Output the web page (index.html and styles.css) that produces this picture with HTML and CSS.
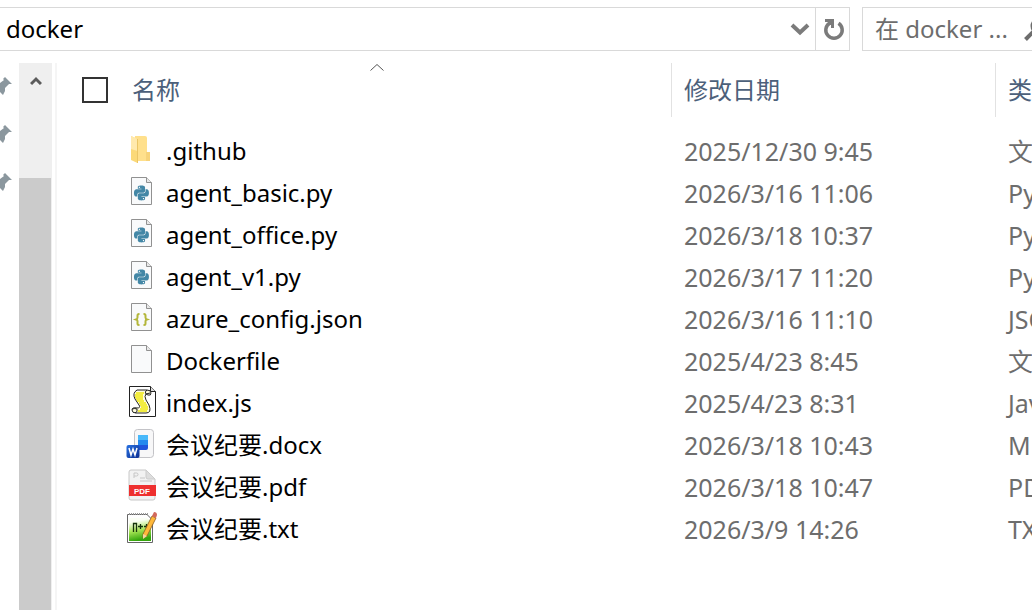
FILE: index.html
```html
<!DOCTYPE html>
<html lang="zh-CN">
<head>
    <meta charset="UTF-8">
    <meta name="viewport" content="width=device-width, initial-scale=1.0">
    <title>docker</title>
    <link rel="stylesheet" href="styles.css">
</head>
<body>
    <!-- Icons used more than once -->
    <svg class="symbols" aria-hidden="true">
        <symbol id="pin" viewBox="0 0 12 18">
            <path d="M5 0L12 7L9 7L5 11L5 14L3 18L0 15L0 6L4 3L3 2Z" fill="#8b979e"/>
        </symbol>
        <symbol id="page" viewBox="0 0 32 32">
            <path d="M5.500 2.500H20.500L25.500 7.500V29.500H5.500Z" fill="#f9fafb" stroke="#919191"/>
            <path d="M20.500 2.500V7.500H25.500" fill="#e8e8e8" stroke="#919191"/>
        </symbol>
        <path id="snake" d="M14.25.18l.9.2.73.26.59.3.45.32.34.34.25.34.16.33.1.3.04.26.02.2-.01.13V8.5l-.05.63-.13.55-.21.46-.26.38-.3.31-.33.25-.35.19-.35.14-.33.1-.3.07-.26.04-.21.02H8.77l-.69.05-.59.14-.5.22-.41.27-.33.32-.27.35-.2.36-.15.37-.1.35-.07.32-.04.27-.02.21v3.06H3.17l-.21-.03-.28-.07-.32-.12-.35-.18-.36-.26-.36-.36-.35-.46-.32-.59-.28-.73-.21-.88-.14-1.05-.05-1.23.06-1.22.16-1.04.24-.87.32-.71.36-.57.4-.44.42-.33.42-.24.4-.16.36-.1.32-.05.24-.01h.16l.06.01h8.16v-.83H6.18l-.01-2.75-.02-.37.05-.34.11-.31.17-.28.25-.26.31-.23.38-.2.44-.18.51-.15.58-.12.64-.1.71-.06.77-.04.84-.02 1.27.05zm-6.3 1.98l-.23.33-.08.41.08.41.23.34.33.22.41.09.41-.09.33-.22.23-.34.08-.41-.08-.41-.23-.33-.33-.22-.41-.09-.41.09z"/>
        <symbol id="python" viewBox="0 0 32 32">
            <use href="#page"/>
            <g transform="translate(8 10.500) scale(0.620)" fill="#4387a6">
                <use href="#snake"/>
                <use href="#snake" transform="rotate(180 12 12)"/>
            </g>
        </symbol>
    </svg>

    <header class="toolbar">
        <div class="address">
            <input type="text" class="address-input" value="docker" aria-label="地址">
            <button class="icon-button" aria-label="以前的位置">
                <svg width="20" height="14" viewBox="0 0 20 14"><path d="M2 3L10 10.500L18 3" fill="none" stroke="#7b7b7b" stroke-width="4"/></svg>
            </button>
            <button class="icon-button refresh" aria-label="刷新">
                <svg width="22" height="24" viewBox="0 0 22 24">
                    <path d="M15.500 6.200A8.200 8.200 0 1 1 6.500 6.200" fill="none" stroke="#7b7b7b" stroke-width="3.500"/>
                    <path d="M2 2H11V11H8V8H5V5H2Z" fill="#7b7b7b"/>
                </svg>
            </button>
        </div>
        <div class="search">
            <input type="text" class="search-input" placeholder="在 docker ..." aria-label="搜索">
            <svg class="search-icon" width="24" height="24" viewBox="0 0 24 24">
                <circle cx="15" cy="8" r="7" fill="none" stroke="#6d6d6d" stroke-width="3"/>
                <path d="M11 12L1.500 21.500" stroke="#6d6d6d" stroke-width="4"/>
            </svg>
        </div>
    </header>

    <main class="explorer">
        <nav class="pins">
            <svg class="pin"><use href="#pin"/></svg>
            <svg class="pin"><use href="#pin"/></svg>
            <svg class="pin"><use href="#pin"/></svg>
        </nav>
        <div class="scrollbar">
            <button class="scroll-up" aria-label="向上滚动">
                <svg width="12" height="10" viewBox="0 0 12 10"><path d="M1 8L6 3L11 8" fill="none" stroke="#5b5b5b" stroke-width="3"/></svg>
            </button>
            <div class="scroll-thumb"></div>
        </div>

        <section class="files">
            <table>
                <thead>
                    <tr>
                        <th class="col-name">
                            <div class="name-head">
                                <input type="checkbox" class="select-all" aria-label="全选">
                                <span>名称</span>
                            </div>
                            <svg class="sort-arrow" width="14" height="8" viewBox="0 0 14 8"><path d="M0.500 7.500L7 1.500L13.500 7.500" fill="none" stroke="#555"/></svg>
                        </th>
                        <th class="col-date">修改日期</th>
                        <th class="col-type">类型</th>
                    </tr>
                </thead>
                <tbody>
                    <tr>
                        <td><div class="file">
                            <svg class="icon" viewBox="0 0 32 32">
                                <path d="M9 3H19Q21 3 21 5V28H9Z" fill="#ffe08c"/>
                                <path d="M20 19H24V28H20Z" fill="#f7d37a"/>
                                <path d="M5 3L11.500 6V30L5 27Z" fill="#fbd978"/>
                                <path d="M5 3L11.500 6V18L5 16Z" fill="#ffe9ad"/>
                                <path d="M11.500 6V30" stroke="#eac566"/>
                            </svg>
                            <span>.github</span>
                        </div></td>
                        <td class="date">2025/12/30 9:45</td>
                        <td class="type">文件夹</td>
                    </tr>
                    <tr>
                        <td><div class="file"><svg class="icon"><use href="#python"/></svg><span>agent_basic.py</span></div></td>
                        <td class="date">2026/3/16 11:06</td>
                        <td class="type">Python File</td>
                    </tr>
                    <tr>
                        <td><div class="file"><svg class="icon"><use href="#python"/></svg><span>agent_office.py</span></div></td>
                        <td class="date">2026/3/18 10:37</td>
                        <td class="type">Python File</td>
                    </tr>
                    <tr>
                        <td><div class="file"><svg class="icon"><use href="#python"/></svg><span>agent_v1.py</span></div></td>
                        <td class="date">2026/3/17 11:20</td>
                        <td class="type">Python File</td>
                    </tr>
                    <tr>
                        <td><div class="file">
                            <svg class="icon" viewBox="0 0 32 32">
                                <use href="#page"/>
                                <path d="M13.500 13H13Q11.500 13 11.500 14.500V16.500Q11.500 18 10 18.500Q11.500 19 11.500 20V22.500Q11.500 24 13 24H13.500M17.500 13H18Q19.500 13 19.500 14.500V16.500Q19.500 18 21 18.500Q19.500 19 19.500 20V22.500Q19.500 24 18 24H17.500" fill="none" stroke="#b3b63a" stroke-width="2"/>
                            </svg>
                            <span>azure_config.json</span>
                        </div></td>
                        <td class="date">2026/3/16 11:10</td>
                        <td class="type">JSON File</td>
                    </tr>
                    <tr>
                        <td><div class="file"><svg class="icon"><use href="#page"/></svg><span>Dockerfile</span></div></td>
                        <td class="date">2025/4/23 8:45</td>
                        <td class="type">文件</td>
                    </tr>
                    <tr>
                        <td><div class="file">
                            <svg class="icon" viewBox="0 0 32 32">
                                <path d="M3.500 1.500H24.500L29.500 6.500V31.500H3.500Z" fill="#fff" stroke="#222"/>
                                <path d="M24.500 1.500V6.500H29.500" fill="#ddd" stroke="#222"/>
                                <path d="M11 5H21Q25 5 25 8Q25 11 22 10L20 9Q18 11 20 15L23 20Q26 28 20 28H10Q6 28 6 25Q6 22 11 23Q15 23 13 20L9 14Q6 8 11 5Z" fill="#fffde0" stroke="#222"/>
                                <path d="M10 8H18M9 10H17M9 12H17M10 14H17M11 16H18M13 18H20M14 20H21M15 22H22M14 24H22M12 26H21" stroke="#f0e80c" stroke-width="1.400"/>
                                <path d="M21 5Q18 7 20 9L24 8M6 24Q9 23 11 24Q12 27 9 28" fill="none" stroke="#222"/>
                            </svg>
                            <span>index.js</span>
                        </div></td>
                        <td class="date">2025/4/23 8:31</td>
                        <td class="type">JavaScript 文件</td>
                    </tr>
                    <tr>
                        <td><div class="file">
                            <svg class="icon" viewBox="0 0 32 32">
                                <defs>
                                    <linearGradient id="wordBadge" x2="1" y2="1"><stop stop-color="#2872e2"/><stop offset="1" stop-color="#0c2e91"/></linearGradient>
                                </defs>
                                <rect x="8.500" y="2.500" width="19" height="28" rx="3" fill="#f7f7f8" stroke="#c3c3c7"/>
                                <path d="M12 8H22V13H12Z" fill="#48b8fa"/>
                                <path d="M12 13H22V18H12Z" fill="#2489ee"/>
                                <path d="M12 18H22V21Q22 23 20 23H12Z" fill="#2054dc"/>
                                <rect x="0.500" y="18" width="13" height="13" rx="2" fill="url(#wordBadge)"/>
                                <path d="M3 21L5 28L7 22L9 28L11 21" fill="none" stroke="#fff" stroke-width="1.500"/>
                            </svg>
                            <span>会议纪要.docx</span>
                        </div></td>
                        <td class="date">2026/3/18 10:43</td>
                        <td class="type">Microsoft Word 文档</td>
                    </tr>
                    <tr>
                        <td><div class="file">
                            <svg class="icon" viewBox="0 0 32 32">
                                <path d="M5 1H20L29 10V29Q29 31 27 31H5Q3 31 3 29V3Q3 1 5 1Z" fill="#f2f2f2" stroke="#c8c8c8"/>
                                <path d="M20 1V8Q20 10 22 10H29Z" fill="#ddd" stroke="#ccc"/>
                                <path d="M8 9V4H10.500Q12 4 12 5.500T10.500 7H8M14 9H19M14 12H26" fill="none" stroke="#c6c6c6"/>
                                <path d="M3 16H30V27H3Z" fill="#ee302f"/>
                                <text x="16" y="25" text-anchor="middle" class="pdf-label">PDF</text>
                            </svg>
                            <span>会议纪要.pdf</span>
                        </div></td>
                        <td class="date">2026/3/18 10:47</td>
                        <td class="type">PDF 文件</td>
                    </tr>
                    <tr>
                        <td><div class="file">
                            <svg class="icon" viewBox="0 0 32 32">
                                <defs>
                                    <linearGradient id="notepad" x1="0" y1="0" x2="0.200" y2="1"><stop offset="0.200" stop-color="#fbfff5"/><stop offset="0.600" stop-color="#a5e454"/><stop offset="1" stop-color="#35a60d"/></linearGradient>
                                </defs>
                                <path d="M1.500 3.500H21L26.500 9V31.500H1.500Z" fill="#fff" stroke="#666"/>
                                <path d="M3 7H21L25 10V30H3Z" fill="url(#notepad)"/>
                                <path d="M3 3H22" stroke="#999" stroke-width="2" stroke-dasharray="1 1"/>
                                <path d="M7.500 21V12.500H10.500V21M12 15.500H17M14.500 13V18M18 15.500H23M20.500 13V18" fill="none" stroke="#16340c" stroke-width="1.300"/>
                                <path d="M26 5L30 7L21 25L17 27L17 23Z" fill="#ffb83a" stroke="#8a5a22" stroke-width="0.800"/>
                                <path d="M26 5L28 1Q31 1 31 4L30 7Z" fill="#d2695c"/>
                                <path d="M17 23L21 25L17 28Z" fill="#f5d7a0"/>
                            </svg>
                            <span>会议纪要.txt</span>
                        </div></td>
                        <td class="date">2026/3/9 14:26</td>
                        <td class="type">TXT 文件</td>
                    </tr>
                </tbody>
            </table>
        </section>
    </main>
</body>
</html>
```
FILE: styles.css
```css
* {
    box-sizing: border-box;
}

body {
    margin: 0;
    height: 100vh;
    display: flex;
    flex-direction: column;
    overflow: hidden;
    background-color: #fff;
    font-family: "Noto Sans", "Noto Sans CJK SC", sans-serif;
    font-size: 24px;
    line-height: 42px;
    color: #000;
}

button {
    padding: 0;
    border: none;
    background: none;
    cursor: pointer;
}

input {
    font: inherit;
}

.symbols {
    position: absolute;
    width: 0;
    height: 0;
}

/* Address bar and search box */
.toolbar {
    display: flex;
    gap: 12px;
    padding-top: 7px;
}

.address,
.search {
    display: flex;
    height: 44px;
    border: 1px solid #d9d9d9;
}

.address {
    flex: 1;
    border-left: none;
}

.address-input,
.search-input {
    flex: 1;
    min-width: 0;
    border: none;
    outline: none;
    background: none;
    padding: 0 6px;
}

.icon-button {
    width: 32px;
    padding-left: 2px;
    display: flex;
    align-items: center;
    justify-content: center;
}

.refresh {
    width: 34px;
    border-left: 1px solid #d9d9d9;
}

.search {
    width: 170px;
    border-right: none;
    overflow: hidden;
}

.search-input {
    flex: none;
    width: 161px;
    padding: 0 12px;
}

.search-input::placeholder {
    color: #6d6d6d;
    opacity: 1;
}

.search-icon {
    flex: none;
    margin-top: 10px;
}

/* Navigation strip */
.explorer {
    flex: 1;
    display: flex;
    min-height: 0;
    padding-top: 12px;
}

.pins {
    width: 19px;
    display: flex;
    flex-direction: column;
    gap: 30px;
    padding-top: 14px;
}

.pin {
    width: 12px;
    height: 18px;
    flex: none;
}

.scrollbar {
    width: 33px;
    display: flex;
    flex-direction: column;
    background-color: #efefef;
}

.scroll-up {
    height: 36px;
    margin-bottom: 79px;
    display: flex;
    align-items: center;
    justify-content: center;
}

.scroll-thumb {
    flex: 1;
    margin-right: 1px;
    background-color: #cbcbcb;
}

/* File list */
.files {
    flex: 1;
    min-width: 0;
    margin-left: 3px;
    border-left: 2px solid #f5f5f5;
    overflow: hidden;
}

table {
    width: 100%;
    table-layout: fixed;
    border-collapse: separate;
    border-spacing: 0;
}

th,
td {
    padding: 0;
    text-align: left;
    font-weight: normal;
    white-space: nowrap;
    overflow: hidden;
}

th {
    height: 54px;
    color: #4c607a;
}

thead::after {
    content: "";
    display: block;
    height: 13px;
}

td {
    height: 42px;
}

.col-name {
    position: relative;
}

.col-date,
.col-type {
    padding-left: 12px;
    border-left: 1px solid #e2e2e2;
}

.col-date {
    width: 324px;
}

.col-type {
    width: 37px;
}

.name-head {
    display: flex;
    align-items: center;
    gap: 24px;
    padding-left: 25px;
}

.select-all {
    appearance: none;
    width: 26px;
    height: 26px;
    margin: 0;
    border: 2px solid #333;
    background-color: #fff;
}

.sort-arrow {
    position: absolute;
    top: 0;
    left: 50%;
    margin-left: 6px;
}

.file {
    display: flex;
    align-items: center;
    gap: 8px;
    padding-left: 69px;
}

.icon {
    width: 32px;
    height: 32px;
    margin-bottom: 4px;
    flex: none;
}

.date,
.type {
    padding-left: 13px;
    color: #6d6d6d;
    font-size: 25px;
}

.pdf-label {
    font: bold 8px "Liberation Sans", sans-serif;
    fill: #fff;
}
```
